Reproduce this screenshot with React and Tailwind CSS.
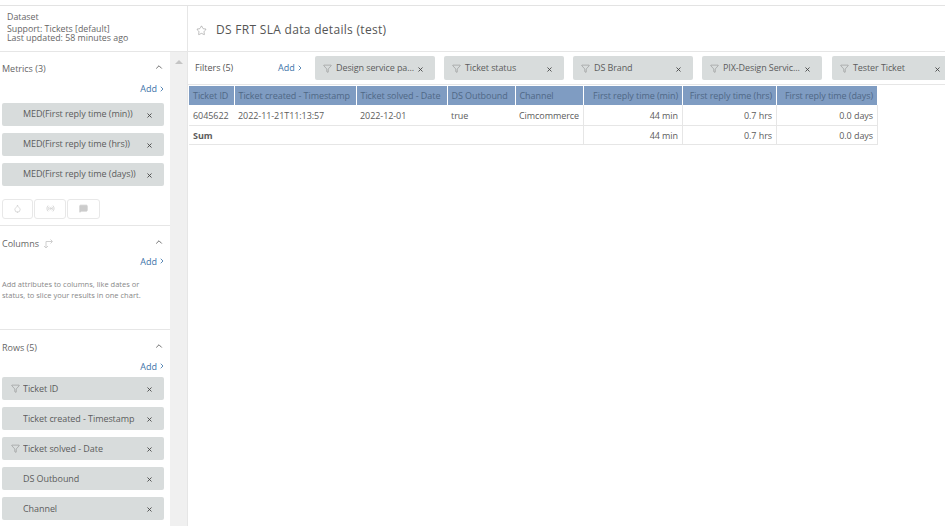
import { Filter, Star, ChevronUp, ChevronRight, X, Droplet, MessageSquare, Radio } from 'lucide-react';

const metrics = ['MED(First reply time (min))', 'MED(First reply time (hrs))', 'MED(First reply time (days))'];
const rows = [
  { label: 'Ticket ID', filter: true },
  { label: 'Ticket created - Timestamp' },
  { label: 'Ticket solved - Date', filter: true },
  { label: 'DS Outbound' },
  { label: 'Channel' },
];
const filters = ['Design service pa...', 'Ticket status', 'DS Brand', 'PIX-Design Servic...', 'Tester Ticket'];
const columns = [
  { label: 'Ticket ID', w: 'w-[45px]' },
  { label: 'Ticket created - Timestamp', w: 'w-[122px]' },
  { label: 'Ticket solved - Date', w: 'w-[91px]' },
  { label: 'DS Outbound', w: 'w-[68px]' },
  { label: 'Channel', w: 'w-[68px]' },
  { label: 'First reply time (min)', w: 'w-[99px]', right: true },
  { label: 'First reply time (hrs)', w: 'w-[94px]', right: true },
  { label: 'First reply time (days)', w: 'w-[101px]', right: true },
];
const dataRow = ['6045622', '2022-11-21T11:13:57', '2022-12-01', 'true', 'Cimcommerce', '44 min', '0.7 hrs', '0.0 days'];

function Chip({ label, filter, raised }) {
  return (
    <div className="flex h-[23px] w-[162px] items-center rounded-[2px] bg-[#d8dcdc] pr-[11px] text-[9px] tracking-[-0.07px] text-[#5c5c5c]">
      <span className="flex w-[21px] shrink-0 justify-end pr-[3px]">
        {filter && <Filter size={9} strokeWidth={1} className="text-[#666]" />}
      </span>
      <span className={`flex-1 truncate ${raised ? 'pb-[1px]' : 'pt-[1px]'}`}>{label}</span>
      <X size={7} strokeWidth={3} className="mt-[2px] shrink-0 text-[#444]" />
    </div>
  );
}

function FilterChip({ label, last }) {
  return (
    <div className={`flex h-[24px] w-[120px] shrink-0 items-center rounded-[2px] bg-[#d8dcdc] pl-[8px] pr-[11px] text-[9px] tracking-[-0.1px] text-[#5c5c5c] ${last ? 'ml-[1px]' : ''}`}>
      <Filter size={9} strokeWidth={1} className="mr-[4px] shrink-0 text-[#666]" />
      <span className="flex-1 whitespace-nowrap">{label}</span>
      <X size={7} strokeWidth={3} className="mt-[2px] shrink-0 text-[#444]" />
    </div>
  );
}

function SectionHead({ title, extra, className }) {
  return (
    <div className={`flex items-center justify-between pl-[2px] pr-[6px] text-[9px] text-[#666] ${className}`}>
      <span className="flex items-center gap-[4px]">
        {title}
        {extra}
      </span>
      <ChevronUp size={10} strokeWidth={2} className="-translate-y-[2px] text-[#555]" />
    </div>
  );
}

function AddLink() {
  return (
    <div className="flex items-center justify-end pr-[4px] text-[9px] text-[#3d73a8]">
      Add
      <ChevronRight size={8} strokeWidth={2.5} className="ml-[1px]" />
    </div>
  );
}

function SwapIcon() {
  return (
    <svg width="11" height="10" viewBox="0 0 11 10" fill="none" stroke="#cfcfcf" strokeWidth="1">
      <path d="M3 9V2.5h6" />
      <path d="M7.5 0.5l2 2-2 2" />
      <path d="M1 7l2 2 2-2" />
    </svg>
  );
}

export default function App() {
  return (
    <div className="flex h-[526px] w-[945px] flex-col overflow-hidden bg-white font-['Open_Sans',sans-serif]">
      <div className="h-[6px] shrink-0 border-b border-[#e3e3e3]" />

      {/* header */}
      <div className="flex h-[46px] shrink-0 border-b border-[#e6e6e6]">
        <div className="w-[188px] shrink-0 border-r border-[#e6e6e6] pl-[7px] pt-[6px] text-[8.8px] leading-[10px] text-[#666]">
          <div className="mb-[2px]">Dataset</div>
          <div className="h-[9px]">Support: Tickets [default]</div>
          <div className="h-[10px]">Last updated: 58 minutes ago</div>
        </div>
        <div className="flex items-center pl-[8px] pt-[2px] text-[12px] tracking-[0.3px] text-[#555]">
          <Star size={11} strokeWidth={1} className="mr-[9px] mt-[2px] text-[#777]" />
          DS FRT SLA data details (test)
        </div>
      </div>

      <div className="flex min-h-0 flex-1">
        {/* left panel */}
        <div className="flex w-[188px] shrink-0 border-r border-[#e6e6e6]">
          <div className="w-[170px] shrink-0">
            <div className="h-[174px] border-b border-[#e6e6e6]">
              <SectionHead title="Metrics (3)" className="h-[10px] translate-y-[12px]" />
              <div className="pt-[20px]">
                <AddLink />
              </div>
              <div className="ml-[2px] mt-[7px] flex flex-col gap-[7px]">
                {metrics.map((m) => (
                  <Chip key={m} label={m} raised />
                ))}
              </div>
              <div className="ml-[2px] mt-[13px] flex gap-[1px]">
                <div className="flex h-[20px] w-[31px] items-center justify-center rounded-[3px] border border-[#e8e8e8]">
                  <Droplet size={9} className="text-[#ccc]" />
                </div>
                <div className="flex h-[20px] w-[32px] items-center justify-center rounded-[3px] border border-[#e8e8e8]">
                  <Radio size={9} className="text-[#ccc]" />
                </div>
                <div className="flex h-[20px] w-[33px] items-center justify-center rounded-[3px] border border-[#e8e8e8]">
                  <MessageSquare size={9} fill="#ccc" className="text-[#ccc]" />
                </div>
              </div>
            </div>

            <div className="h-[104px] border-b border-[#e6e6e6]">
              <SectionHead title="Columns" extra={<SwapIcon />} className="pt-[11px]" />
              <div className="pt-[4px]">
                <AddLink />
              </div>
              <p className="pl-[2px] pt-[11px] text-[7.5px] leading-[11px] text-[#888]">
                Add attributes to columns, like dates or
                <br />
                status, to slice your results in one chart.
              </p>
            </div>

            <div>
              <SectionHead title="Rows (5)" className="pt-[11px]" />
              <div className="pt-[5px]">
                <AddLink />
              </div>
              <div className="ml-[2px] mt-[4px] flex flex-col gap-[7px]">
                {rows.map((r) => (
                  <Chip key={r.label} label={r.label} filter={r.filter} />
                ))}
              </div>
            </div>
          </div>
          <div className="flex flex-1 justify-center bg-[#f0f0f0] pt-[8px]">
            <div className="h-0 w-0 border-x-[4px] border-b-[4px] border-x-transparent border-b-[#c4c4c4]" />
          </div>
        </div>

        {/* main */}
        <div className="min-w-0 flex-1">
          <div className="flex h-[33px] items-center overflow-hidden border-b border-[#e6e6e6] pl-[7px] text-[9px]">
            <span className="w-[83px] shrink-0 text-[#555]">Filters (5)</span>
            <span className="flex w-[37px] shrink-0 items-center text-[#3d73a8]">
              Add
              <ChevronRight size={8} strokeWidth={2.5} className="ml-[1px]" />
            </span>
            <div className="flex gap-[9px]">
              {filters.map((f, i) => (
                <FilterChip key={f} label={f} last={i === filters.length - 1} />
              ))}
            </div>
          </div>

          <table className="ml-[1px] mt-[1px] table-fixed border-collapse text-[9px] tracking-[-0.07px] text-[#5c5c5c]">
            <thead>
              <tr className="h-[19px] bg-[#7f9cc2] text-[#4f6886]">
                {columns.map((c) => (
                  <th
                    key={c.label}
                    className={`${c.w} whitespace-nowrap border-r border-white px-[4px] pt-[1px] font-normal ${c.right ? 'text-right' : 'text-left'}`}
                  >
                    {c.label}
                  </th>
                ))}
              </tr>
            </thead>
            <tbody>
              <tr className="h-[20px] border-b border-[#e6e6e6]">
                {dataRow.map((v, i) => (
                  <td
                    key={i}
                    className={`whitespace-nowrap px-[4px] pt-[1px] ${columns[i].right ? 'text-right' : 'text-left'} ${i >= 4 ? 'border-r border-[#e6e6e6]' : ''}`}
                  >
                    {v}
                  </td>
                ))}
              </tr>
              <tr className="h-[19px] border-b border-[#e6e6e6]">
                <td colSpan={5} className="border-r border-[#e6e6e6] px-[4px] pt-[2px] font-bold">
                  Sum
                </td>
                <td className="border-r border-[#e6e6e6] px-[4px] pt-[2px] text-right">44 min</td>
                <td className="border-r border-[#e6e6e6] px-[4px] pt-[2px] text-right">0.7 hrs</td>
                <td className="border-r border-[#e6e6e6] px-[4px] pt-[2px] text-right">0.0 days</td>
              </tr>
            </tbody>
          </table>
        </div>
      </div>
    </div>
  );
}
